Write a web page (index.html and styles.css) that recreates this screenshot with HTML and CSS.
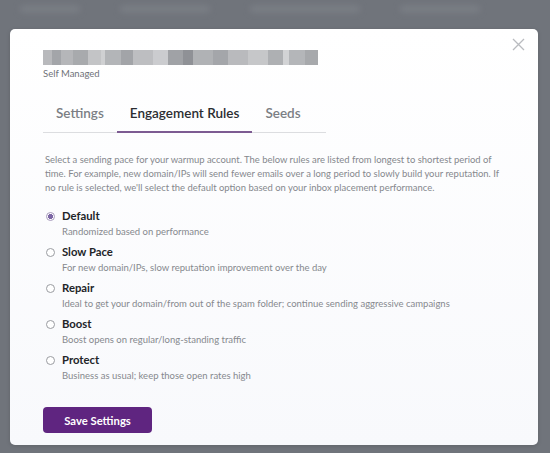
FILE: index.html
```html
<!DOCTYPE html>
<html>
<head>
<meta charset="utf-8">
<link rel="stylesheet" href="styles.css">
</head>
<body>
<div class="backdrop">
  <div class="bg-row">
    <span class="bg-blob b1"></span><span class="bg-blob b2"></span><span class="bg-blob b3"></span><span class="bg-blob b4"></span>
  </div>
  <div class="modal">
    <button class="close" aria-label="Close">
      <svg width="13" height="13" viewBox="0 0 13 13"><path d="M1 1L12 12M12 1L1 12" stroke="#b9bbbf" stroke-width="1.3" fill="none"/></svg>
    </button>
    <div class="title-blur"></div>
    <div class="subtitle">Self Managed</div>
    <div class="tabs">
      <div class="tab">Settings</div>
      <div class="tab active">Engagement Rules</div>
      <div class="tab">Seeds</div>
    </div>
    <p class="intro">Select a sending pace for your warmup account. The below rules are listed from longest to shortest period of<br>time. For example, new domain/IPs will send fewer emails over a long period to slowly build your reputation. If<br>no rule is selected, we'll select the default option based on your inbox placement performance.</p>
    <div class="options">
      <div class="option">
        <span class="radio checked"></span>
        <div class="opt-text"><div class="opt-title">Default</div><div class="opt-desc">Randomized based on performance</div></div>
      </div>
      <div class="option">
        <span class="radio"></span>
        <div class="opt-text"><div class="opt-title">Slow Pace</div><div class="opt-desc">For new domain/IPs, slow reputation improvement over the day</div></div>
      </div>
      <div class="option">
        <span class="radio"></span>
        <div class="opt-text"><div class="opt-title">Repair</div><div class="opt-desc">Ideal to get your domain/from out of the spam folder; continue sending aggressive campaigns</div></div>
      </div>
      <div class="option">
        <span class="radio"></span>
        <div class="opt-text"><div class="opt-title">Boost</div><div class="opt-desc">Boost opens on regular/long-standing traffic</div></div>
      </div>
      <div class="option">
        <span class="radio"></span>
        <div class="opt-text"><div class="opt-title">Protect</div><div class="opt-desc">Business as usual; keep those open rates high</div></div>
      </div>
    </div>
    <button class="save">Save Settings</button>
  </div>
</div>
</body>
</html>
```

FILE: styles.css
```css
* { box-sizing: border-box; }
html, body { margin: 0; padding: 0; }
body {
  width: 550px;
  height: 453px;
  overflow: hidden;
  background: #70747b;
  font-family: Lato, "Open Sans", sans-serif;
}
.backdrop {
  position: relative;
  width: 550px;
  height: 453px;
  padding: 29px 0 0 10px;
}
.bg-row {
  position: absolute;
  top: 0; left: 0; right: 0;
  height: 26px;
  display: flex;
  gap: 40px;
  padding: 6px 20px;
  filter: blur(3px);
}
.bg-blob { height: 6px; background: #7c8087; border-radius: 3px; }
.b1 { width: 60px; }
.b2 { width: 90px; }
.b3 { width: 110px; }
.b4 { width: 80px; }
.modal {
  position: relative;
  width: 528px;
  height: 416px;
  background: linear-gradient(#ffffff, #f8f9fc);
  border-radius: 5px;
  padding: 21px 0 0 33px;
  box-shadow: 0 1px 4px rgba(0,0,0,0.15);
}
.close {
  position: absolute;
  top: 9px;
  right: 13px;
  width: 13px;
  height: 13px;
  padding: 0;
  border: 0;
  background: none;
  display: flex;
}
.title-blur {
  width: 275px;
  height: 15px;
  background:
    linear-gradient(90deg,
      #b8b9bc 0 9px, #a3a5a9 9px 18px, #b5b6b9 18px 30px, #a8aaad 30px 45px, #c3c4c6 45px 58px,
      #cfd0d2 58px 62px, #b3b5b8 62px 78px, #a2a4a8 78px 90px, #bdbec1 90px 110px, #cbcccf 110px 125px,
      #a0a2a6 125px 140px, #8f9196 140px 150px, #b0b2b5 150px 170px, #a4a6aa 170px 185px, #b9babd 185px 205px,
      #c6c7c9 205px 225px, #aeb0b3 225px 240px, #d2d3d5 240px 246px, #b4b6b9 246px 262px, #a7a9ac 262px 275px);
}
.subtitle {
  margin-top: 3px;
  font-size: 9.5px;
  line-height: 12px;
  color: #6f7278;
}
.tabs {
  margin-top: 24px;
  width: 283px;
  display: flex;
  border-bottom: 1px solid #dcdde0;
}
.tab {
  padding: 0 13px 9px;
  font-size: 13.5px;
  line-height: 18px;
  font-weight: 600;
  color: #7b7e84;
  margin-bottom: -1px;
  border-bottom: 2px solid transparent;
}
.tab.active {
  color: #2b2d31;
  border-bottom-color: #7d5b92;
}
.intro {
  margin: 20px 0 0 2px;
  font-size: 9.45px;
  line-height: 14px;
  color: #85888d;
  white-space: nowrap;
}
.options {
  margin-top: 14px;
  display: flex;
  flex-direction: column;
  gap: 6px;
  padding-left: 3px;
}
.option {
  display: flex;
  gap: 7px;
  align-items: flex-start;
}
.radio {
  margin-top: 3px;
  width: 9px;
  height: 9px;
  border-radius: 50%;
  border: 1px solid #9a9ca1;
  background: #fff;
  flex: none;
}
.radio.checked {
  border-color: #a89bbd;
  background: radial-gradient(circle, #7c66a4 0 2.3px, #fff 2.8px);
}
.opt-title {
  font-size: 11.3px;
  line-height: 14px;
  font-weight: 700;
  color: #222428;
}
.opt-desc {
  margin-top: 2px;
  font-size: 9.5px;
  line-height: 14px;
  color: #86898e;
}
.save {
  margin: 24px 0 0 0;
  width: 109px;
  height: 26px;
  border: 0;
  border-radius: 4px;
  background: #5f2580;
  color: #fff;
  font-family: Lato, "Open Sans", sans-serif;
  font-size: 11.3px;
  font-weight: 700;
  padding: 0;
}
```
